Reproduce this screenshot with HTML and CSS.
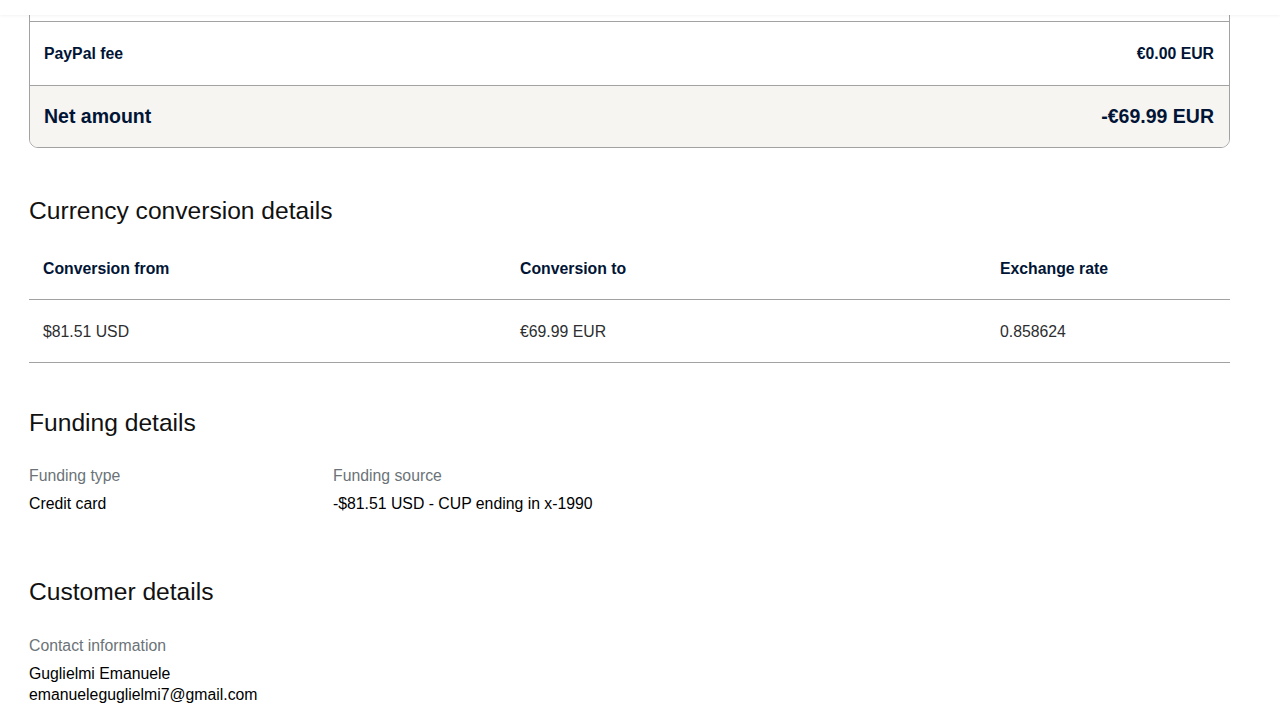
FILE: index.html
```html
<!DOCTYPE html>
<html lang="en">
<head>
<meta charset="utf-8">
<title>Transaction details</title>
<link rel="stylesheet" href="styles.css">
</head>
<body>
<header class="topbar"></header>
<main class="page">
  <section class="summary-card">
    <div class="sum-row sum-row--hidden"></div>
    <div class="sum-row">
      <span class="sum-label">PayPal fee</span>
      <span class="sum-value">€0.00 EUR</span>
    </div>
    <div class="sum-row sum-row--total">
      <span class="sum-label">Net amount</span>
      <span class="sum-value">-€69.99 EUR</span>
    </div>
  </section>

  <section class="section section--conversion">
    <h2 class="section-title">Currency conversion details</h2>
    <table class="conv-table">
      <thead>
        <tr>
          <th class="col-from">Conversion from</th>
          <th class="col-to">Conversion to</th>
          <th class="col-rate">Exchange rate</th>
        </tr>
      </thead>
      <tbody>
        <tr>
          <td>$81.51 USD</td>
          <td>€69.99 EUR</td>
          <td>0.858624</td>
        </tr>
      </tbody>
    </table>
  </section>

  <section class="section section--funding">
    <h2 class="section-title">Funding details</h2>
    <div class="detail-grid">
      <div class="detail">
        <div class="detail-label">Funding type</div>
        <div class="detail-value">Credit card</div>
      </div>
      <div class="detail">
        <div class="detail-label">Funding source</div>
        <div class="detail-value">-$81.51 USD - CUP ending in x-1990</div>
      </div>
    </div>
  </section>

  <section class="section section--customer">
    <h2 class="section-title">Customer details</h2>
    <div class="detail">
      <div class="detail-label">Contact information</div>
      <div class="detail-value">Guglielmi Emanuele</div>
      <div class="detail-value">emanueleguglielmi7@gmail.com</div>
    </div>
  </section>
</main>
</body>
</html>
```
FILE: styles.css
```css
* { box-sizing: border-box; }

html, body {
  margin: 0;
  padding: 0;
  background: #ffffff;
}

body {
  font-family: "Liberation Sans", Arial, Helvetica, sans-serif;
  color: #000000;
  overflow: hidden;
}

.topbar {
  position: fixed;
  top: 0;
  left: 0;
  right: 0;
  height: 15px;
  background: #ffffff;
  box-shadow: 0 1px 3px rgba(0, 0, 0, 0.05);
  z-index: 10;
}

.page {
  margin-top: -43px;
  padding: 0 50px 0 29px;
}

/* summary card */
.summary-card {
  border: 1px solid #a2a2a2;
  border-radius: 0 0 9px 9px;
  overflow: hidden;
}

.sum-row {
  display: flex;
  justify-content: space-between;
  align-items: center;
  height: 64px;
  padding: 0 15px 0 14px;
  border-top: 1px solid #a2a2a2;
  color: #001435;
  font-weight: 700;
  font-size: 15.8px;
}

.sum-row--hidden {
  border-top: 0;
  height: 63px;
}

.sum-row--total {
  height: 62px;
  background: #f7f5f2;
  font-size: 19.5px;
}

/* sections */
.section-title {
  margin: 0;
  font-size: 24.6px;
  line-height: 30px;
  font-weight: 400;
  color: #111111;
}

.section--conversion {
  margin-top: 48px;
}

.conv-table {
  margin-top: 10px;
  width: 100%;
  border-collapse: collapse;
  table-layout: fixed;
}

.conv-table th,
.conv-table td {
  height: 63px;
  padding: 0 14px;
  text-align: left;
  vertical-align: middle;
  border-bottom: 1px solid #a2a2a2;
  font-size: 15.8px;
}

.conv-table th {
  padding-top: 3px;
  font-weight: 700;
  color: #001435;
}

.conv-table td {
  padding-top: 2px;
  color: #2c2e2f;
}

.col-from { width: 477px; }
.col-to { width: 480px; }

.section--funding {
  margin-top: 45px;
}

.detail-grid {
  display: grid;
  grid-template-columns: 304px 1fr;
  margin-top: 27px;
}

.detail-label {
  font-size: 15.8px;
  line-height: 21px;
  color: #6c7378;
  margin-bottom: 7px;
}

.detail-value {
  font-size: 15.8px;
  line-height: 21px;
  color: #000000;
}

.section--customer {
  margin-top: 63px;
}

.section--customer .detail {
  margin-top: 28px;
}
```
